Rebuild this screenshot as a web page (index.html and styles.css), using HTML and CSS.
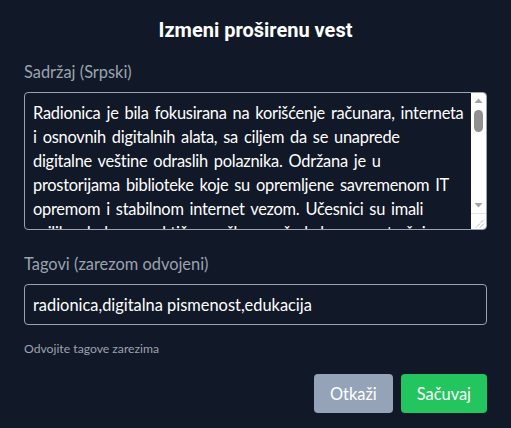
FILE: index.html
```html
<!DOCTYPE html>
<html lang="sr">
<head>
<meta charset="utf-8">
<link rel="stylesheet" href="styles.css">
</head>
<body>
<div class="modal">
  <h2 class="title">Izmeni proširenu vest</h2>
  <div class="field">
    <label class="label" for="content">Sadržaj (Srpski)</label>
    <div class="textarea-wrap">
      <textarea id="content" class="textarea" rows="5">Radionica je bila fokusirana na korišćenje računara, interneta i osnovnih digitalnih alata, sa ciljem da se unaprede digitalne veštine odraslih polaznika. Održana je u prostorijama biblioteke koje su opremljene savremenom IT opremom i stabilnom internet vezom. Učesnici su imali priliku da kroz praktične vežbe nauče kako se pretražuje internet, koristi elektronska pošta i popunjavaju online obrasci.</textarea>
      <div class="scrollbar" aria-hidden="true">
        <div class="sb-btn">
          <svg width="15" height="15" viewBox="0 0 15 15"><path d="M3.5 10 L7.5 5.5 L11.5 10 Z" fill="#a3a3a3"/></svg>
        </div>
        <div class="sb-track">
          <div class="sb-thumb"></div>
        </div>
        <div class="sb-btn">
          <svg width="15" height="15" viewBox="0 0 15 15"><path d="M3.5 5 L7.5 9.5 L11.5 5 Z" fill="#a3a3a3"/></svg>
        </div>
        <div class="sb-corner">
          <svg width="15" height="15" viewBox="0 0 15 15"><path d="M5 13.5 L13.5 5 M9 13.5 L13.5 9" stroke="#8a8a8a" stroke-width="1" stroke-dasharray="1 1"/></svg>
        </div>
      </div>
    </div>
  </div>
  <div class="field">
    <label class="label" for="tags">Tagovi (zarezom odvojeni)</label>
    <input id="tags" class="input" type="text" value="radionica,digitalna pismenost,edukacija">
    <p class="help">Odvojite tagove zarezima</p>
  </div>
  <div class="actions">
    <button class="btn btn-cancel">Otkaži</button>
    <button class="btn btn-save">Sačuvaj</button>
  </div>
</div>
</body>
</html>
```
FILE: styles.css
```css
html, body {
  margin: 0;
  padding: 0;
  background: #111827;
}
body {
  font-family: Lato, "Noto Sans", sans-serif;
  color: #ffffff;
}
.modal {
  padding: 16px 24px 0 24px;
  display: flex;
  flex-direction: column;
}
.title {
  margin: 0 0 16px 0;
  font-family: Roboto, "Liberation Sans", sans-serif;
  font-weight: 700;
  font-size: 20px;
  line-height: 28px;
  text-align: center;
  color: #ffffff;
}
.field {
  display: flex;
  flex-direction: column;
  margin-bottom: 22px;
}
.label {
  font-size: 16.4px;
  line-height: 24px;
  color: #9ca3af;
  margin-bottom: 8px;
}
.textarea-wrap {
  position: relative;
  display: flex;
}
.textarea {
  flex: 1;
  font-family: inherit;
  font-size: 16.4px;
  line-height: 24px;
  word-spacing: 2px;
  letter-spacing: -0.25px;
  color: #ffffff;
  background: #111827;
  border: 1px solid #9ca3af;
  border-radius: 4px;
  padding: 8px 22px 8px 8px;
  margin: 0;
  resize: none;
  overflow: hidden;
}
.scrollbar {
  position: absolute;
  top: 1px;
  right: 1px;
  bottom: 1px;
  width: 15px;
  background: #ffffff;
  border-top-right-radius: 3px;
  border-bottom-right-radius: 3px;
  display: flex;
  flex-direction: column;
}
.sb-btn {
  height: 15px;
  display: flex;
}
.sb-track {
  flex: 1;
  padding: 2px 3px;
}
.sb-thumb {
  height: 22px;
  background: #909090;
  border-radius: 5px;
}
.sb-corner {
  height: 15px;
  border-top: 1px solid #e4e4e4;
  display: flex;
}
.input {
  font-family: inherit;
  font-size: 16.4px;
  line-height: 23px;
  color: #ffffff;
  background: #111827;
  border: 1px solid #9ca3af;
  border-radius: 4px;
  padding: 8px;
  margin: 0;
}
.help {
  margin: 16px 0 0 0;
  font-size: 12.2px;
  line-height: 16px;
  color: #9ca3af;
}
.actions {
  display: flex;
  justify-content: flex-end;
  gap: 8px;
  margin-top: -5px;
}
.btn {
  font-family: inherit;
  font-size: 16.4px;
  line-height: 23px;
  color: #ffffff;
  border: none;
  border-radius: 4px;
  padding: 8px 16px;
}
.btn-cancel {
  background: #94a3b8;
}
.btn-save {
  background: #22c55e;
}
```
